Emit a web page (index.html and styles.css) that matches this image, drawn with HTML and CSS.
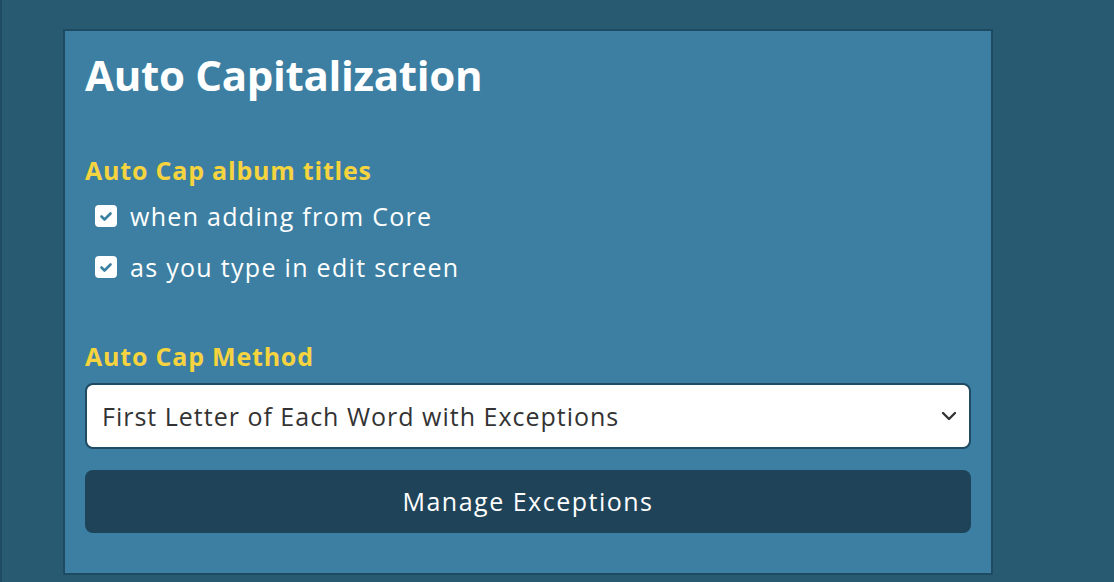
FILE: index.html
```html
<!DOCTYPE html>
<html lang="en">
<head>
<meta charset="utf-8">
<title>Auto Capitalization</title>
<link rel="stylesheet" href="styles.css">
</head>
<body>
<div class="page">
  <div class="edge"></div>
  <section class="panel">
    <h1 class="title">Auto Capitalization</h1>
    <h2 class="label label-first">Auto Cap album titles</h2>
    <div class="checks">
      <label class="check">
        <span class="box"><svg viewBox="0 0 22 22" width="22" height="22"><path d="M6.5 11.5 L9.5 14.5 L15.5 8.5" fill="none" stroke="#3b7fa1" stroke-width="2.6" stroke-linecap="round" stroke-linejoin="round"/></svg></span>
        <span class="check-text">when adding from Core</span>
      </label>
      <label class="check">
        <span class="box"><svg viewBox="0 0 22 22" width="22" height="22"><path d="M6.5 11.5 L9.5 14.5 L15.5 8.5" fill="none" stroke="#3b7fa1" stroke-width="2.6" stroke-linecap="round" stroke-linejoin="round"/></svg></span>
        <span class="check-text">as you type in edit screen</span>
      </label>
    </div>
    <h2 class="label label-second">Auto Cap Method</h2>
    <div class="select">
      <span class="select-text">First Letter of Each Word with Exceptions</span>
      <svg class="chevron" viewBox="0 0 16 10" width="16" height="10"><path d="M2 2 L8 8 L14 2" fill="none" stroke="#333" stroke-width="2.4" stroke-linecap="round" stroke-linejoin="round"/></svg>
    </div>
    <button class="btn" type="button">Manage Exceptions</button>
  </section>
</div>
</body>
</html>
```

FILE: styles.css
```css
* { box-sizing: border-box; }
html, body { margin: 0; padding: 0; }
body {
  background: #285a72;
  font-family: "Open Sans", Lato, sans-serif;
  width: 1114px;
  height: 582px;
  overflow: hidden;
}
.page {
  display: flex;
  align-items: flex-start;
  height: 582px;
}
.edge {
  width: 2px;
  height: 582px;
  background: #1f4b62;
}
.panel {
  margin-left: 61px;
  margin-top: 29px;
  width: 930px;
  height: 546px;
  background: #3c7fa2;
  border: 2px solid #1f4b62;
  padding: 20px 20px 0 20px;
  display: flex;
  flex-direction: column;
}
.title {
  margin: 0;
  font-size: 42px;
  line-height: 48px;
  font-weight: 700;
  letter-spacing: -0.3px;
  color: #ffffff;
}
.label {
  margin: 0;
  font-size: 25px;
  line-height: 28px;
  font-weight: 700;
  letter-spacing: 0.8px;
  color: #f6d43f;
}
.label-first { margin-top: 57px; }
.label-second { margin-top: 60px; }
.checks {
  display: flex;
  flex-direction: column;
  gap: 21px;
  margin-top: 17px;
  padding-left: 10px;
}
.check {
  display: flex;
  align-items: center;
  gap: 13px;
  height: 30px;
}
.box {
  width: 22px;
  height: 22px;
  border-radius: 4px;
  background: #ffffff;
  display: flex;
}
.check-text {
  font-size: 25px;
  line-height: 30px;
  font-weight: 500;
  letter-spacing: 1.3px;
  color: #ffffff;
}
.select {
  margin-top: 13px;
  height: 66px;
  flex-shrink: 0;
  background: #ffffff;
  border: 2px solid #1f4b62;
  border-radius: 8px;
  display: flex;
  align-items: center;
  justify-content: space-between;
  padding: 0 12px 0 15px;
}
.select-text {
  font-size: 25px;
  font-weight: 500;
  letter-spacing: 1px;
  color: #333333;
}
.btn {
  margin-top: 21px;
  height: 63px;
  flex-shrink: 0;
  border: none;
  border-radius: 8px;
  background: #1f4459;
  color: #ffffff;
  font-family: inherit;
  font-size: 25px;
  font-weight: 500;
  letter-spacing: 1.5px;
  width: 100%;
  padding: 0 0 2px 0;
}
```
